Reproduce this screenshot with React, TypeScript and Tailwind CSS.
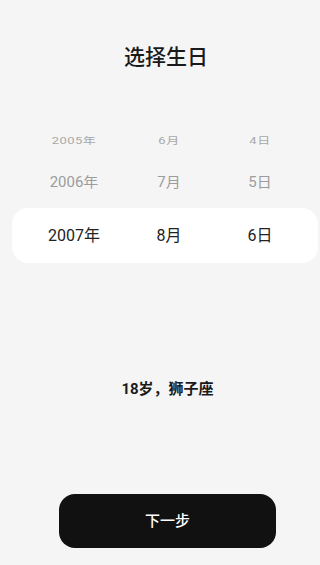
import React from "react";

const cjk = { fontFamily: 'Roboto, "Noto Sans CJK SC", sans-serif' };

function Row({
  items,
  className,
  textClass,
}: {
  items: string[];
  className: string;
  textClass: string;
}) {
  return (
    <div className={`grid grid-cols-[124px_66px_116px] items-center ${className}`}>
      {items.map((t) => (
        <div key={t} className="flex justify-center">
          <span className={textClass}>{t}</span>
        </div>
      ))}
    </div>
  );
}

export default function App() {
  return (
    <div
      className="w-[320px] h-[565px] overflow-hidden bg-[#f5f5f5] flex flex-col"
      style={cjk}
    >
      <div className="w-[332px] pt-[44px] text-center text-[21px] leading-[26px] font-medium text-[#1a1a1a]">
        选择生日
      </div>

      <div className="ml-3 w-[306px] mt-[56px] flex flex-col">
        <Row
          items={["2005年", "6月", "4日"]}
          className="h-[30px]"
          textClass="inline-block text-[13px] leading-[16px] text-[#a8a8a8] scale-y-[0.72] tracking-[0.5px]"
        />
        <Row
          items={["2006年", "7月", "5日"]}
          className="h-[52px]"
          textClass="inline-block text-[15px] leading-[18px] text-[#9c9c9c] scale-y-[0.92]"
        />
        <Row
          items={["2007年", "8月", "6日"]}
          className="h-[55px] bg-white rounded-[16px]"
          textClass="inline-block text-[16px] leading-[20px] text-[#222222]"
        />
      </div>

      <div className="w-[335px] mt-[116px] text-center text-[15px] leading-[20px] font-bold text-[#1a1a1a]">
        18岁，狮子座
      </div>

      <button className="ml-[59px] mt-[95px] w-[217px] h-[54px] rounded-[16px] bg-[#111111] text-white text-[15px] font-medium flex items-center justify-center">
        下一步
      </button>
    </div>
  );
}
